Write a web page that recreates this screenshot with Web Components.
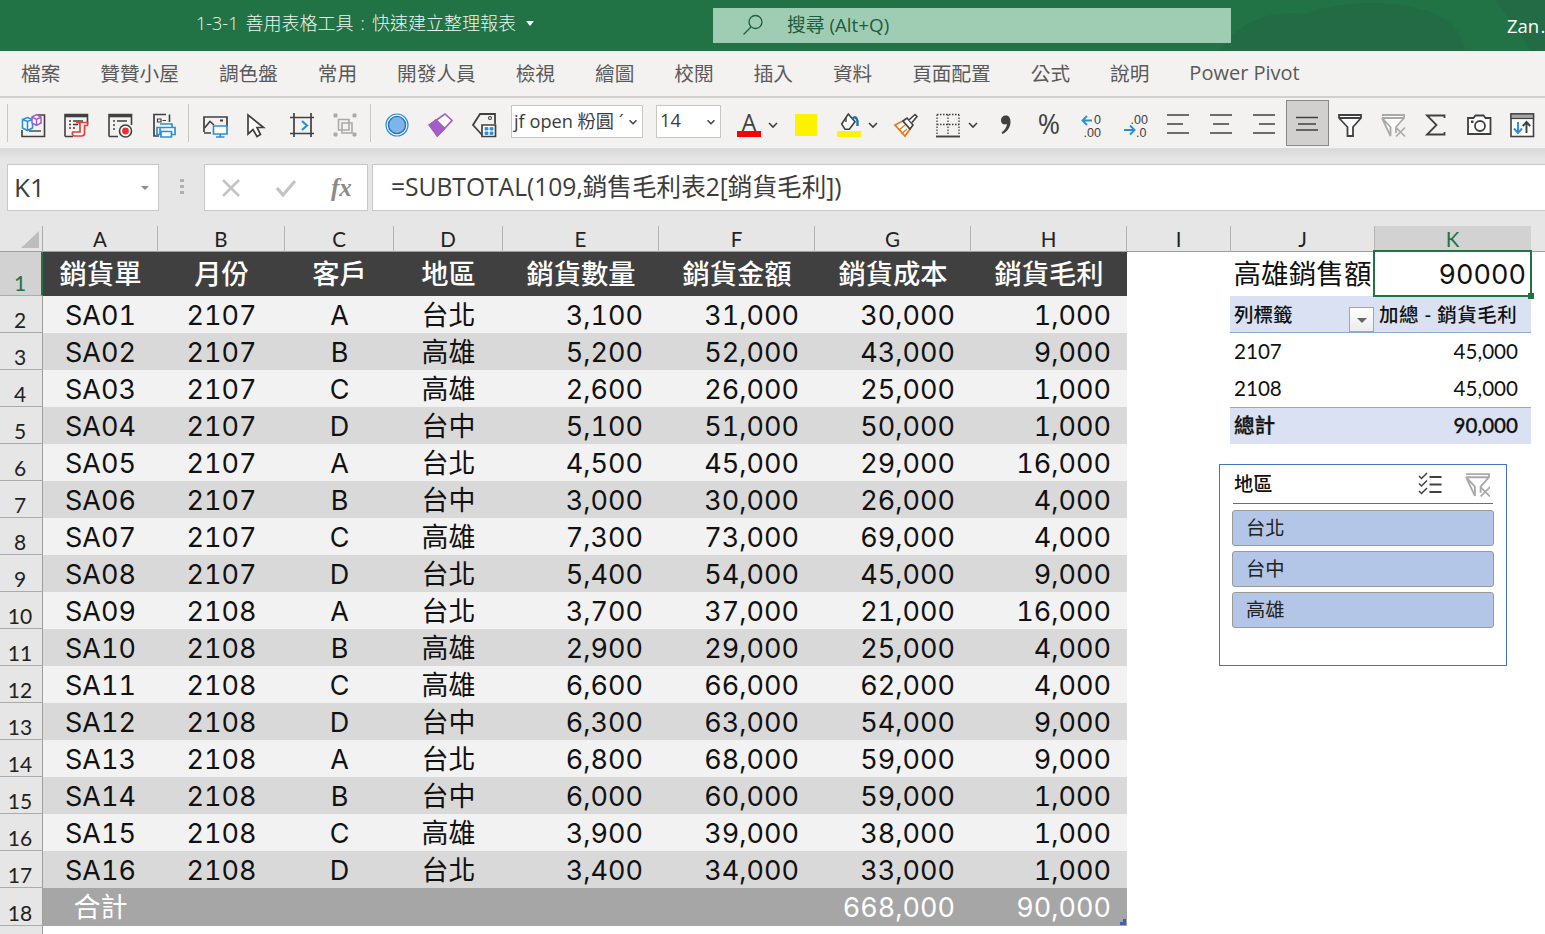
<!DOCTYPE html>
<html lang="zh-Hant"><head><meta charset="utf-8"><title>Excel</title>
<style>
html,body{margin:0;padding:0;width:1545px;height:934px;overflow:hidden;background:#fff}
body{font-family:"Open Sans","Noto Sans CJK TC",sans-serif}
x-app{display:flex;flex-direction:column;width:1545px;height:934px}
</style></head><body>
<x-app>
  <x-titlebar></x-titlebar>
  <x-tabs></x-tabs>
  <x-toolbar></x-toolbar>
  <x-formula></x-formula>
  <x-sheet></x-sheet>
</x-app>
<script>
const D='#404040',B='#2b8fd6',R='#ee3b3b',P='#a55cc8',G='#a9a9a9';
const s=(d,c=D,w=1.6,f='none',x='')=>`<path d="${d}" stroke="${c}" stroke-width="${w}" fill="${f}" ${x}/>`;
const T=(x,y,t,z=12.5)=>`<text x="${x}" y="${y}" font-family="Liberation Sans" font-size="${z}" fill="#404040">${t}</text>`;
const ICONS={
cubes:s('M16 2H23.5V23.5H1V17')+s('M8 18H20',D,1.4)+s('M1.5 6.5L6.5 4.5L11.5 6.5V15L6.5 17.5L1.5 15ZM1.5 6.5L6.5 8.5L11.5 6.5M6.5 8.5V17.5',B,1.6,'#fff')+s('M11 4L15.5 1.5L20 4V10L15.5 12.5L11 10ZM11 4L15.5 6.5L20 4M15.5 6.5V12.5',P,1.5,'#fff'),
form:s('M1 23.5V1.5H23.5V11M1 23.5H9',D,1.6)+s('M1 3H23.5',D,2.6)+s('M5 8H7M9 8H19M5 11.5H7M9 11.5H14M5 15H7M9 15H11',D,1.3)+s('M12 9.5H23.5V12.5H20.5V20A3 3 0 0 1 17.5 23H10.5A2.3 2.3 0 0 1 9 19H16V12A2.5 2.5 0 0 0 13.5 9.5',R,1.7,'#fff'),
record:s('M1 23.5V1.5H23.5V12M1 23.5H10',D,1.6)+s('M1 3H23.5',D,2.6)+s('M5 8H7M9 8H19M5 12H7M5 16H7',D,1.3)+'<circle cx="17.5" cy="18" r="6" stroke="#404040" stroke-width="1.6" fill="#fff"/><circle cx="17.5" cy="18" r="3.4" fill="#ee2f2f"/>',
printdoc:s('M15 1.5H3V23H8',D,1.7)+s('M18.5 1.5V9',D,1.6)+s('M6.5 6H10V9H6.5ZM11.5 7.5H15',D,1.2)+s('M9 11H21V14.5H24V21.5H21M9 21.5H6V14.5H9ZM6 14.5H24',B,1.7,'#fff')+s('M10 18.5H20.5V24H10Z',B,1.7,'#fff'),
picture:s('M1 19V4H24V14M1 20H8',D,1.7)+s('M1.5 15L7 8.5L11 12',D,1.6)+s('M17 7.5H20',D,2)+s('M10.5 13H24V21H10.5ZM17.2 21V24M13 24H21.5',B,1.7,'#fff'),
cursor:s('M2 2V21L7 16.5L11 23.5L14.5 21.5L11 14.5H17.5Z',D,1.7,'#fff'),
crop:s('M0 4.5H24M0 20.5H24M4 0V24M21 0V24',D,1.7)+s('M12 8L17 12.5L12 17',B,2.2),
group:s('M1 1H4V4H1ZM20 1H23V4H20ZM1 20H4V23H1ZM20 20H23V23H20Z',G,1,G)+s('M5.5 6.5H16V17H5.5ZM9 10H19V20H9Z',G,1.6),
circle:'<circle cx="12" cy="12" r="11" fill="#fff" stroke="#2b8fd6" stroke-width="1.2"/><circle cx="12" cy="12" r="8.6" fill="#7fb4ea" stroke="#2272b8" stroke-width="1.4"/>',
eraser:s('M1.3 12L17 1L24 7.5L9.3 23Z',P,1.7,'#fff')+s('M1.3 12L8 6.5L17 15.5L9.3 23Z',P,1.2,'#a55cc8'),
tag:s('M17 1H8L1 12L11 23',D,1.8)+s('M17 1H23V11',D,1.8)+'<circle cx="18" cy="5" r="1.5" fill="none" stroke="#404040" stroke-width="1.1"/>'+s('M10 12H23.5V23.5H10Z',D,1.7,'#fff')+s('M13 14.5H16V17H13ZM18 14.5H21V17H18ZM13 19H16V21.5H13ZM18 19H21V21.5H18Z',B,.8,B),
chev:s('M8 10L12 14L16 10',D,1.6),
bigA:'<text x="12" y="18" text-anchor="middle" font-family="Open Sans" font-size="23" fill="#404040">A</text><rect x="0" y="18" width="24" height="6" fill="#f00"/>',
yellow:'<rect x="1" y="1" width="22" height="22" fill="#fff200"/>',
bucket:s('M4.7 11L11.3 1L18 8.7L12.3 16.3H8Z',D,1.6,'#fff')+s('M9 4V9',D,1.4)+s('M15.5 5.5Q19 2 20.5 8L20.5 13',"#2272b8",2.4)+'<rect x="0" y="18" width="24" height="6" fill="#fff200"/>',
brush:s('M1 12L9 8L16 16L11 23Z','#e07a1f',1.8,'#fff')+s('M5 17L11 12M7.5 21L13 16','#e07a1f',1.2)+s('M9 8L13 5L19 12L16 16Z',D,1.6,'#fff')+s('M15 7L21 1.5L23 3.5L18 9.5',D,1.6,'#fff'),
borders:s('M1 1.5H23M1 1.5V22M23 1.5V22M12 1.5V22M1 11.5H23',D,1.3,'none','stroke-dasharray="1.5 1.5"')+s('M0 23.5H24',D,1.9),
comma:`<path d="M12 2.5C9 2.5 7 4.5 7 7.5C7 10 8.8 11.5 11 11.5C11.8 11.5 12.5 11.3 13 11C12.6 14.5 10.5 17.5 7.5 19.5L8.6 21C13.5 18.5 16.5 14 16.5 9C16.5 5 15 2.5 12 2.5Z" fill="#404040"/>`,
percent:'<text x="12" y="21" text-anchor="middle" font-family="Open Sans" font-size="27" fill="#404040">%</text>',
decl:`<path d="M3 7.5H12M7 3L2.5 7.5L7 12" stroke="${B}" stroke-width="1.9" fill="none"/>`+T(14,10.6,'0')+T(3.5,24.4,'.00'),
incr:T(7.5,10.6,'.00')+`<path d="M1 17H11M7 12.5L11.5 17L7 21.5" stroke="${B}" stroke-width="1.9" fill="none"/>`+T(13,24.4,'.0'),
left:s('M1 2H23M1 11H17M1 20H23',D,1.7),
center:s('M1 2H23M4 11H20M1 20H23',D,1.7),
right:s('M1 2H23M7 11H23M1 20H23',D,1.7),
middle:s('M1 4.5H23M3 11H21M1 17H23',D,1.7),
funnel:s('M1 2H23V5L15 14V23H9.5V14L1 5ZM1 5H23',D,1.8,'#fff'),
nofilter:s('M1 2H23V5L15 14V20M9.5 23V14L1 5ZM1 5H23',G,1.8,'#fff')+s('M15 14.5L24 23.5M24 14.5L15 23.5',G,1.7),
sigma:s('M20.5 5V2.5H3L12.5 12L3 21.5H20.5V19',D,1.8),
camera:s('M1 5H6.5L8.5 2.5H16.5L18.5 5H23.5V21H1Z',D,1.8,'#fff')+'<circle cx="13" cy="13" r="5" fill="none" stroke="#404040" stroke-width="1.8"/><rect x="4" y="7.5" width="2.5" height="2.5" fill="#404040"/>',
sort:`<rect x="1" y="1" width="22.5" height="22.5" fill="#fff" stroke="#404040" stroke-width="1.6"/><rect x="1" y="1" width="22.5" height="4.5" fill="#a6a6a6" stroke="#404040" stroke-width="1.2"/><path d="M8 9V20M4 15.5L8 20L12 15.5" stroke="${B}" stroke-width="1.9" fill="none"/><path d="M16.5 20V9M12.8 13L16.5 9L20.2 13" stroke="#404040" stroke-width="1.9" fill="none"/>`,
check:s('M1 4L3.5 6.5L9 1M1 11.5L3.5 14L9 8.5M1 19L3.5 21.5L9 16',D,1.5)+s('M11.5 5H23.5M11.5 12.5H23.5M11.5 20H23.5',D,1.9)
};
function shadow(el,html){el.attachShadow({mode:'open'}).innerHTML=html}
customElements.define('x-icon',class extends HTMLElement{
  connectedCallback(){const n=this.getAttribute('name'),z=this.getAttribute('size')||24;
    shadow(this,`<style>:host{display:flex;align-items:center;justify-content:center;flex:none;width:43.5px;height:46px;box-sizing:border-box}
    :host([active]){background:#d2d0ce;border:1px solid #8a8886}svg{display:block;overflow:visible;flex:none;margin-top:3px}</style>
    <svg width="${z}" height="${z}" viewBox="0 0 24 24">${ICONS[n]}</svg>`)}
});
customElements.define('x-titlebar',class extends HTMLElement{
  connectedCallback(){shadow(this,`<style>
  :host{display:flex;align-items:center;height:51px;background:#217346;color:#fff;flex:none;position:relative;overflow:hidden}
  .deco{position:absolute;right:0;top:0;height:51px;width:345px}
  .title{margin-left:196px;width:320px;font:18px "Open Sans","Noto Sans CJK TC",sans-serif;word-spacing:2.4px;color:#eef5f0;white-space:nowrap;margin-top:-7px;font-weight:300;flex:none}
  .caret{width:0;height:0;border:4.5px solid transparent;border-top:5px solid #fff;border-bottom:0;margin-left:10px;margin-top:-4px;flex:none}
  .search{position:relative;margin-left:179px;width:518px;height:35px;background:#9fcdb3;display:flex;align-items:center;color:#1f5c3c;font:18.8px "Open Sans","Noto Sans CJK TC",sans-serif;margin-top:0;flex:none}
  .search svg{position:absolute;left:28px;top:5px}
  .search span{margin-left:74px;margin-top:-3px}
  .user{position:absolute;left:1507px;top:13px;width:38px;font:18.5px "Open Sans",sans-serif;white-space:nowrap;word-spacing:-3.5px}
  </style>
  <svg class="deco" viewBox="0 0 345 51"><g fill="#226b44"><path d="M20 51C40 20 70 10 105 14C140 0 190 0 225 10C250 20 262 30 265 51Z"/><path d="M295 0H345V51H330C320 30 310 20 295 0Z"/></g></svg>
  <div class="title">1-3-1 善用表格工具 : 快速建立整理報表</div><div class="caret"></div>
  <div class="search"><svg width="24" height="24" viewBox="0 0 24 24"><circle cx="14.5" cy="9" r="6.5" fill="none" stroke="#1f5c3c" stroke-width="1.3"/><path d="M10 14L2.5 21.5" stroke="#1f5c3c" stroke-width="1.3"/></svg><span>搜尋 (Alt+Q)</span></div>
  <div class="user">Zan .</div>`)}
});
customElements.define('x-tabs',class extends HTMLElement{
  connectedCallback(){const t=['檔案','贊贊小屋','調色盤','常用','開發人員','檢視','繪圖','校閱','插入','資料','頁面配置','公式','說明','Power Pivot'];
  shadow(this,`<style>:host{display:flex;align-items:center;gap:40px;height:45px;padding-left:21px;background:#f3f2f1;flex:none;border-bottom:2px solid #d2d0ce;color:#5a5a5a;
  font:19.65px "Open Sans","Noto Sans CJK TC",sans-serif;box-sizing:content-box}
  span{white-space:nowrap;margin-top:-3px}span:first-child{margin-right:1px}span:last-child{font-size:20px}</style>${t.map(x=>`<span>${x}</span>`).join('')}`)}
});
customElements.define('x-toolbar',class extends HTMLElement{
  connectedCallback(){shadow(this,`<style>
  :host{display:flex;align-items:center;height:51px;background:#f3f2f1;flex:none;box-sizing:border-box;border-bottom:1px solid #dcdcdc;padding-left:7px}
  .sep{width:1px;height:38px;background:#c8c6c4;flex:none}
  .box{flex:none;height:33px;box-sizing:border-box;border:1px solid #c8c6c4;background:#fff;display:flex;align-items:center;font:18.2px "Open Sans","Noto Sans CJK TC",sans-serif;color:#3c3c3c;padding-left:2px;padding-bottom:3px;position:relative;overflow:hidden;white-space:nowrap;margin-top:-3px}
  .box svg{position:absolute;right:2px;top:9px;background:#fff}
  </style>
  <div class="sep" style="margin-right:3px"></div>
  <x-icon name="cubes"></x-icon><x-icon name="form"></x-icon><x-icon name="record"></x-icon><x-icon name="printdoc"></x-icon>
  <div class="sep" style="margin:0 4px 0 3px"></div>
  <x-icon name="picture"></x-icon><x-icon name="cursor"></x-icon><x-icon name="crop"></x-icon><x-icon name="group"></x-icon>
  <div class="sep" style="margin:0 4px 0 3px"></div>
  <x-icon name="circle"></x-icon><x-icon name="eraser"></x-icon><x-icon name="tag"></x-icon>
  <div class="box" style="width:132px;margin-left:5.5px">jf open 粉圓 ´<svg width="14" height="14" viewBox="4 4 16 16">${ICONS.chev}</svg></div>
  <div class="box" style="width:65px;margin-left:13px;padding-left:3px">14<svg width="14" height="14" viewBox="4 4 16 16">${ICONS.chev}</svg></div>
  <x-icon name="bigA" style="width:32px;margin-left:12px"></x-icon><x-icon name="chev" style="width:16px"></x-icon>
  <x-icon name="yellow" style="margin-left:3.25px"></x-icon>
  <x-icon name="bucket" style="width:32px;margin-left:5.25px"></x-icon><x-icon name="chev" style="width:16px"></x-icon>
  <x-icon name="brush" style="margin-left:3.25px"></x-icon>
  <x-icon name="borders" style="width:32px;margin-left:4.25px"></x-icon><x-icon name="chev" style="width:16px;margin-left:1px"></x-icon>
  <x-icon name="comma" style="width:43px;margin-left:3.5px"></x-icon>
  <x-icon name="percent" style="width:43px"></x-icon><x-icon name="decl" style="width:43px"></x-icon><x-icon name="incr" style="width:43px"></x-icon>
  <x-icon name="left" style="width:43px"></x-icon><x-icon name="center" style="width:43px"></x-icon><x-icon name="right" style="width:43px"></x-icon>
  <x-icon name="middle" active style="width:43px"></x-icon><x-icon name="funnel" style="width:43px"></x-icon><x-icon name="nofilter" style="width:43px"></x-icon>
  <x-icon name="sigma" style="width:43px"></x-icon><x-icon name="camera" style="width:43px"></x-icon><x-icon name="sort" style="width:43px"></x-icon>`)}
});
customElements.define('x-formula',class extends HTMLElement{
  connectedCallback(){shadow(this,`<style>
  :host{display:flex;align-items:flex-start;height:77px;box-sizing:border-box;padding:15px 0 0 7px;flex:none;background:linear-gradient(#d9d9d9 0,#e6e6e6 10px);font:26px "Open Sans","Noto Sans CJK TC",sans-serif;color:#3c3c3c}
  .b{height:47px;box-sizing:border-box;background:#fff;border:1px solid #c8c8c8;display:flex;align-items:center;flex:none;position:relative}
  .name{width:152px;padding-left:6px;padding-bottom:2px}
  .tri{position:absolute;right:9px;top:21px;border:4px solid transparent;border-top:4px solid #8a8a8a;border-bottom:0}
  .dots{width:45px;flex:none;display:flex;flex-direction:column;align-items:center;gap:3px;padding-top:15px}
  .dots i{width:4px;height:3px;background:#b0b0b0;display:block}
  .btns{width:164px;justify-content:flex-start;gap:34px;padding-left:16px;box-sizing:border-box}
  .btns svg{display:block}
  .fx{font:italic 700 25px "Liberation Serif",serif;color:#8a8a8a;margin-left:0}
  .f{flex:1;margin-left:4px;padding-left:18px;padding-bottom:6px;white-space:nowrap;border-right:0;font-size:24.6px}
  </style>
  <div class="b name">K1<span class="tri"></span></div>
  <div class="dots"><i></i><i></i><i></i></div>
  <div class="b btns"><svg width="20" height="20" viewBox="0 0 20 20"><path d="M2 2L18 18M18 2L2 18" stroke="#c4c4c4" stroke-width="2.6"/></svg>
  <svg width="22" height="20" viewBox="0 0 22 20"><path d="M2 10L8 17L20 3" stroke="#c4c4c4" stroke-width="3.2" fill="none"/></svg><span class="fx">fx</span></div>
  <div class="b f">=SUBTOTAL(109,銷售毛利表2[銷貨毛利])</div>`)}
});
customElements.define('x-slicer',class extends HTMLElement{
  connectedCallback(){shadow(this,`<style>
  :host{position:absolute;left:1219px;top:238px;width:288px;height:202px;box-sizing:border-box;border:1px solid #4472c4;background:#fff;padding:0 12px 0 12px;font:19.3px "Noto Sans CJK TC",sans-serif;color:#111;display:block}
  .h{display:flex;align-items:center;height:38px;border-bottom:1px solid #4472c4;margin:0 1px 0 1px;padding-left:1px;font-weight:500}
  .h span{flex:1;margin-top:-2px}
  svg{display:block}
  .i{display:flex;align-items:center;height:36px;box-sizing:border-box;background:#b4c6e7;border:1px solid #999;border-radius:3px;padding-left:13px;padding-bottom:2px;margin-top:5px;color:#222}
  .h+.i{margin-top:6px}
  </style>
  <div class="h"><span>地區</span><svg width="24" height="24" viewBox="0 0 24 24" style="margin-right:23px">${ICONS.check}</svg><svg width="25" height="25" viewBox="0 0 24 24" style="margin-right:3px">${ICONS.nofilter}</svg></div>
  <div class="i">台北</div><div class="i">台中</div><div class="i">高雄</div>`)}
});
customElements.define('x-sheet',class extends HTMLElement{
  connectedCallback(){
  const data=`SA01 2107 A 台北 3,100 31,000 30,000 1,000
SA02 2107 B 高雄 5,200 52,000 43,000 9,000
SA03 2107 C 高雄 2,600 26,000 25,000 1,000
SA04 2107 D 台中 5,100 51,000 50,000 1,000
SA05 2107 A 台北 4,500 45,000 29,000 16,000
SA06 2107 B 台中 3,000 30,000 26,000 4,000
SA07 2107 C 高雄 7,300 73,000 69,000 4,000
SA08 2107 D 台北 5,400 54,000 45,000 9,000
SA09 2108 A 台北 3,700 37,000 21,000 16,000
SA10 2108 B 高雄 2,900 29,000 25,000 4,000
SA11 2108 C 高雄 6,600 66,000 62,000 4,000
SA12 2108 D 台中 6,300 63,000 54,000 9,000
SA13 2108 A 台北 6,800 68,000 59,000 9,000
SA14 2108 B 台中 6,000 60,000 59,000 1,000
SA15 2108 C 高雄 3,900 39,000 38,000 1,000
SA16 2108 D 台北 3,400 34,000 33,000 1,000`.split('\n').map(l=>l.split(' '));
  const pivot={2:[['列標籤<span class="dd"></span>','ph'],['加總 - 銷貨毛利','ph k']],3:[['2107','pv'],['45,000','pv r']],4:[['2108','pv'],['45,000','pv r']],5:[['總計','pt'],['90,000','pt r']]};
  const c=(t,k)=>`<div class="${k}">${t}</div>`;
  let h=c('<i class="tri"></i>','cor');
  'ABCDEFGHIJK'.split('').forEach(x=>h+=c(x,'ch'+(x=='K'?' sel':'')));
  h+=c('','ch end');
  h+=c('1','rh sel');
  ['銷貨單','月份','客戶','地區','銷貨數量','銷貨金額','銷貨成本','銷貨毛利'].forEach(x=>h+=c(x,'hd'));
  h+=c('','w')+c('高雄銷售額','j1')+c('90000<i class="handle"></i>','k1')+c('','w');
  data.forEach((r,i)=>{const n=i+2,b=n%2?' e':' o';
    h+=c(n,'rh');
    r.forEach((v,j)=>h+=c(v,'d'+b+(j<4?' m':' rt')));
    h+=c('','w');
    if(pivot[n]){h+=c(pivot[n][0][0],pivot[n][0][1])+c(pivot[n][1][0],pivot[n][1][1])}else h+=c('','w')+c('','w');
    h+=c('','w');
  });
  h+=c('18','rh')+c('合計','tl m')+c('','tl').repeat(5)+c('668,000','tl rt')+c('90,000<i class="corner"></i>','tl rt')+c('','w').repeat(4);
  h+=c('','rh last');
  shadow(this,`<style>
  :host{display:block;flex:1;position:relative;overflow:hidden;background:#fff}
  .grid{display:grid;grid-template-columns:43px 115px 127px 109px 109px 156px 156px 156px 156px 104px 144px 156px 1fr;grid-template-rows:26px 44px repeat(16,37px) 38px 1fr;height:100%;font:27px Inter,"Noto Sans CJK TC",sans-serif;font-feature-settings:"tnum";color:#111}
  .grid>div{min-width:0;white-space:nowrap;box-sizing:border-box}
  .cor{background:#e6e6e6;border-bottom:1px solid #9e9e9e;border-right:1px solid #aaa;position:relative}
  .tri{position:absolute;left:21px;top:5px;width:0;height:0;border-left:18px solid transparent;border-bottom:17px solid #bdbdbd}
  .ch{background:#e6e6e6;border-bottom:1px solid #9e9e9e;border-right:1px solid #b4b4b4;text-align:center;font:20.5px Lato,sans-serif;line-height:26px;color:#222}
  .ch.sel{background:#d2d2d2;color:#217346;border-right-color:#d2d2d2}
  .ch.end{border-right:0}
  .rh{background:#e6e6e6;border-right:1px solid #9e9e9e;border-bottom:1px solid #ababab;font:21px Lato,sans-serif;color:#222;display:flex;align-items:flex-end;justify-content:center;line-height:23px;padding-right:2px;padding-bottom:1px;grid-column:1}
  .rh.sel{background:#d2d2d2;color:#217346;border-right:2px solid #217346;padding-right:1px}
  .rh.last{border-bottom:0}
  .hd{background:#404040;color:#fff;text-align:center;line-height:45px;font-size:27.3px;font-weight:500}
  .d{line-height:39px}.o{background:#f2f2f2}.e{background:#d9d9d9}
  .m{text-align:center}.rt{text-align:right;padding-right:16px}
  .tl{background:#a6a6a6;color:#fff;line-height:39px;position:relative;font-weight:400}
  .w{background:#fff}
  .j1{padding-left:2.5px;line-height:44px;font-size:27.6px;overflow:visible}
  .k1{position:relative;border:2.5px solid #217346;margin:-2px -1px -1px -2px;text-align:right;padding-right:4px;line-height:45px;background:#fff;z-index:2}
  .handle{position:absolute;right:-4px;bottom:-4px;width:6px;height:6px;background:#217346}
  .ph,.pv,.pt{font:20.6px Lato,"Noto Sans CJK TC",sans-serif;line-height:37px;padding-left:4px;position:relative;font-feature-settings:normal}
  .ph,.pt{margin-left:-1px}
  .ph.k,.pt.r{margin-left:0}
  .ph{background:#d9e1f2;font-weight:500;border-bottom:1px solid #8ea9db;font-size:19.5px;color:#111}
  .ph.k{padding-left:4px;letter-spacing:.45px}
  .dd{position:absolute;right:1px;top:11px;width:25px;height:25px;box-sizing:border-box;border:1px solid #a6a6a6;background:linear-gradient(#fff,#ececec)}
  .dd:after{content:"";position:absolute;left:7px;top:10px;border:5px solid transparent;border-top:5px solid #666;border-bottom:0}
  .pv{background:#fff;padding-left:3px}.r{text-align:right;padding-right:13px}
  .pt{background:#d9e1f2;font-weight:500;border-top:1px solid #8ea9db;font-size:20.6px;line-height:35px;-webkit-text-stroke:.3px #111}
  .corner{position:absolute;right:1px;bottom:1px;width:6px;height:6px;background:linear-gradient(#4060b0,#4060b0) right bottom/6px 3px no-repeat,linear-gradient(#4060b0,#4060b0) right bottom/3px 6px no-repeat}
  </style><div class="grid">${h}</div><x-slicer></x-slicer>`)}
});
</script>
</body></html>
